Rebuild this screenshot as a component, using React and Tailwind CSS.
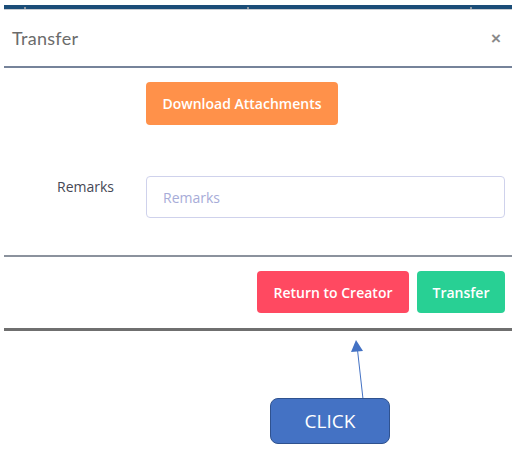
import React from 'react';

export default function App() {
  return (
    <div className="relative w-[527px] h-[461px] bg-white overflow-hidden" style={{ fontFamily: '"Open Sans", sans-serif' }}>
      <div className="ml-[4px] w-[508px] pt-[5px]">
        {/* dark top strip of the page behind the modal */}
        <div className="h-[4px] bg-[#1b4d78] flex justify-between items-end pl-[20px] pr-[40px]">
          <span className="w-[2px] h-[2px] bg-[#8a96a3]" />
          <span className="w-[2px] h-[2px] bg-[#8a96a3]" />
          <span className="w-[2px] h-[2px] bg-[#8a96a3]" />
        </div>
        <div className="h-px bg-[#c9ccd1]" />

        {/* header */}
        <div className="h-[58px] flex items-center justify-between pl-[8px] pr-[11px] border-b-2 border-[#76839a]">
          <span className="text-[18px] text-[#6b6b6b] font-['Lato',sans-serif] tracking-[0.3px]">Transfer</span>
          <span className="text-[17px] leading-none text-[#8a8a8a] font-['Liberation_Sans',sans-serif] font-bold">×</span>
        </div>

        {/* body */}
        <div className="pt-[14px] pb-[37px]">
          <div className="pl-[142px]">
            <button className="h-[43px] w-[192px] rounded-[4px] bg-[#ff914a] text-white text-[14px] font-semibold">
              Download Attachments
            </button>
          </div>
          <div className="mt-[51px] flex items-start">
            <label className="w-[142px] pl-[53px] text-[14px] text-[#464855]">Remarks</label>
            <input
              placeholder="Remarks"
              className="h-[42px] w-[359px] rounded-[4px] border border-[#cfd2ec] px-[16px] text-[14px] placeholder:text-[#a7acd8] outline-none"
            />
          </div>
        </div>

        {/* footer */}
        <div className="h-[2px] bg-[#8b929d]" />
        <div className="h-[71px] flex justify-end items-start pt-[14px] pr-[7px] gap-[8px]">
          <button className="h-[42px] w-[152px] rounded-[4px] bg-[#ff4961] text-white text-[14px] font-semibold">
            Return to Creator
          </button>
          <button className="h-[42px] w-[88px] rounded-[4px] bg-[#28d094] text-white text-[14px] font-semibold">
            Transfer
          </button>
        </div>
        <div className="h-[3px] bg-[#6f6f6f]" />
      </div>

      {/* annotation arrow */}
      <svg className="absolute left-0 top-0" width="527" height="461">
        <line x1="363" y1="399" x2="357.5" y2="350" stroke="#4472c4" strokeWidth="1" />
        <polygon points="356,340 351,352 363,351" fill="#4472c4" />
      </svg>
      <div className="absolute left-[270px] top-[398px] w-[120px] h-[46px] rounded-[8px] bg-[#4472c4] border border-[#2f528f] flex items-center justify-center">
        <span className="text-white text-[19px] font-['Open_Sans',sans-serif]">CLICK</span>
      </div>
    </div>
  );
}
